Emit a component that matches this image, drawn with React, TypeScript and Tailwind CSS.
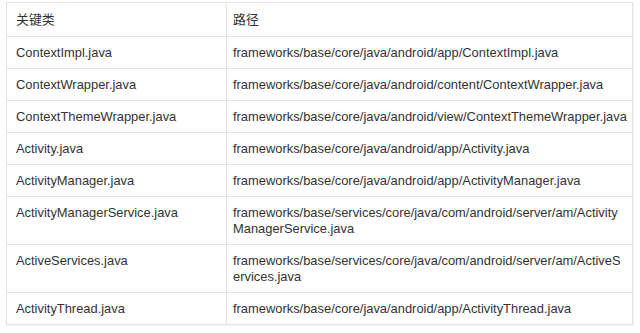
const rows: [string, string[]][] = [
  ["ContextImpl.java", ["frameworks/base/core/java/android/app/ContextImpl.java"]],
  ["ContextWrapper.java", ["frameworks/base/core/java/android/content/ContextWrapper.java"]],
  ["ContextThemeWrapper.java", ["frameworks/base/core/java/android/view/ContextThemeWrapper.java"]],
  ["Activity.java", ["frameworks/base/core/java/android/app/Activity.java"]],
  ["ActivityManager.java", ["frameworks/base/core/java/android/app/ActivityManager.java"]],
  ["ActivityManagerService.java", ["frameworks/base/services/core/java/com/android/server/am/Activity", "ManagerService.java"]],
  ["ActiveServices.java", ["frameworks/base/services/core/java/com/android/server/am/ActiveS", "ervices.java"]],
  ["ActivityThread.java", ["frameworks/base/core/java/android/app/ActivityThread.java"]],
];

const cell = "border border-[#e3e3e3] pt-[8px] pb-[7px] align-top leading-[16px]";
const first = cell + " pl-[9px] pr-[6px]";
const second = cell + " pl-[6px] pr-[2px]";

export default function App() {
  return (
    <div className="h-[333px] w-[640px] bg-white pl-[6px] pt-[2px] font-['Liberation_Sans','Noto_Sans_CJK_SC',sans-serif] text-[12.9px] text-[#333]">
      <table className="w-[627px] table-fixed border-collapse shadow-[1px_1px_2px_rgba(0,0,0,0.06)]">
        <colgroup>
          <col className="w-[220px]" />
          <col />
        </colgroup>
        <thead>
          <tr>
            <th className={first + " pt-[9px] pb-[8px] text-left font-normal"}>关键类</th>
            <th className={second + " pt-[9px] pb-[8px] text-left font-normal"}>路径</th>
          </tr>
        </thead>
        <tbody>
          {rows.map(([name, lines]) => (
            <tr key={name}>
              <td className={first}>{name}</td>
              <td className={second + " whitespace-nowrap"}>
                {lines.map((line) => (
                  <span key={line} className="block">
                    {line}
                  </span>
                ))}
              </td>
            </tr>
          ))}
        </tbody>
      </table>
    </div>
  );
}
